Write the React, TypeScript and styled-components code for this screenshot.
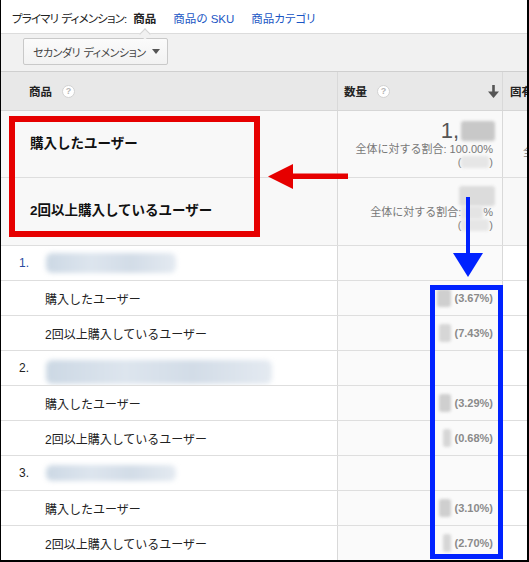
import React from 'react';
import styled, { createGlobalStyle } from 'styled-components';

const GlobalStyle = createGlobalStyle`
  html, body { margin: 0; padding: 0; background: #fff; }
  body {
    font-family: "Liberation Sans", "Noto Sans CJK JP", sans-serif;
    color: #222;
  }
  * { box-sizing: border-box; }
`;

const Frame = styled.div`
  position: relative;
  width: 529px;
  height: 562px;
  border-left: 1px solid #000;
  border-right: 2px solid #000;
  border-bottom: 2px solid #000;
  overflow: hidden;
  background: #fff;
`;

const PrimaryBar = styled.div`
  height: 34px;
  display: flex;
  align-items: center;
  padding: 2px 0 0 11px;
  border-bottom: 1px solid #dcdcdc;
  font-size: 11.5px;
  white-space: nowrap;
  font-feature-settings: "palt";
`;

const DimLabel = styled.span`
  color: #222;
  margin-right: 7px;
  letter-spacing: -0.85px;
  word-spacing: 1px;
`;

const DimOption = styled.span<{ $active?: boolean }>`
  position: relative;
  margin-right: 17px;
  color: ${(p) => (p.$active ? '#222' : '#1a56c4')};
  font-weight: ${(p) => (p.$active ? 700 : 400)};

  ${(p) =>
    p.$active &&
    `
    &::after {
      content: "";
      position: absolute;
      left: 50%;
      bottom: -12px;
      width: 7px;
      height: 7px;
      margin-left: -4px;
      background: #f1f1f1;
      border-top: 1px solid #d4d4d4;
      border-left: 1px solid #d4d4d4;
      transform: rotate(45deg);
    }
  `}
`;

const SecondaryBar = styled.div`
  height: 37px;
  background: #f1f1f1;
  padding: 4px 0 0 22px;
`;

const SelectButton = styled.div`
  width: 145px;
  height: 27px;
  display: flex;
  align-items: center;
  justify-content: space-between;
  padding: 0 7px 0 9px;
  border: 1px solid #c9c9c9;
  border-radius: 2px;
  background: linear-gradient(#fbfbfb, #f2f2f2);
  font-size: 11px;
  color: #444;
  white-space: nowrap;
  letter-spacing: -0.5px;
  word-spacing: 1px;
  font-feature-settings: "palt";
`;

const Caret = styled.span`
  flex: none;
  width: 0;
  height: 0;
  border-left: 4px solid transparent;
  border-right: 4px solid transparent;
  border-top: 5px solid #555;
`;

const Row = styled.div<{ $h: number; $head?: boolean }>`
  display: grid;
  grid-template-columns: 337px 165px 1fr;
  height: ${(p) => p.$h}px;
  border-bottom: 1px solid ${(p) => (p.$head ? '#d6d6d6' : '#dedede')};
  ${(p) => p.$head && 'border-top: 1px solid #cfcfcf; background: #e8e8e8;'}
`;

const Cell = styled.div<{ $bg?: string; $last?: boolean }>`
  display: flex;
  align-items: center;
  min-width: 0;
  overflow: hidden;
  white-space: nowrap;
  background: ${(p) => p.$bg || 'transparent'};
  border-right: ${(p) => (p.$last ? 'none' : '1px solid #d9d9d9')};
`;

const HeadCell = styled(Cell)`
  padding: 0 2px 0 28px;
  font-size: 11.5px;
  font-weight: 700;
  color: #222;
  gap: 10px;
`;

const HeadCellMetric = styled(HeadCell)`
  padding-left: 6px;
`;

const HeadCellEdge = styled(HeadCell)`
  padding-left: 7px;
`;

const Help = styled.span`
  width: 13px;
  height: 13px;
  border-radius: 50%;
  border: 1px solid #d2d2d2;
  background: #fff;
  color: #b5b5b5;
  font-size: 9px;
  font-weight: 700;
  display: inline-flex;
  align-items: center;
  justify-content: center;
`;

const SortArrow = styled.svg`
  margin-left: auto;
  margin-right: 1px;
`;

const SummaryLabel = styled(Cell)`
  padding: 0 0 5px 29px;
  font-size: 13.5px;
  font-weight: 700;
  color: #111;
`;

const SummaryValue = styled(Cell)`
  flex-direction: column;
  align-items: flex-end;
  justify-content: flex-start;
  padding: 8px 7px 0 0;
`;

const BigNum = styled.div`
  display: flex;
  align-items: center;
  gap: 2px;
  font-size: 22px;
  line-height: 24px;
  color: #555;
`;

const ShareLine = styled.div`
  display: flex;
  align-items: center;
  font-size: 11px;
  line-height: 13px;
  color: #777;
  margin-right: 2px;
`;

const ParenLine = styled(ShareLine)`
  line-height: 12px;
`;

const EdgeText = styled(Cell)`
  align-items: flex-start;
  padding: 32px 0 0 20px;
  font-size: 11px;
  color: #777;
`;

const Blob = styled.span<{ $w: number; $h: number; $c?: string }>`
  display: inline-block;
  width: ${(p) => p.$w}px;
  height: ${(p) => p.$h}px;
  background: ${(p) => p.$c || '#d9d9d9'};
  filter: blur(1.5px);
  border-radius: 3px;
`;

const GroupCell = styled(Cell)`
  padding-left: 18px;
  font-size: 12px;
  color: #222;
`;

const Index = styled.span<{ $blue?: boolean }>`
  width: 27px;
  color: ${(p) => (p.$blue ? '#2a4aa0' : '#222')};
`;

const NameBlur = styled.span<{ $w: number; $h: number; $dy: number }>`
  display: inline-block;
  width: ${(p) => p.$w}px;
  height: ${(p) => p.$h}px;
  margin-top: ${(p) => p.$dy}px;
  background: linear-gradient(90deg, #ccd8e4 0%, #dde5ee 35%, #d2dce7 65%, #e4eaf1 100%);
  filter: blur(2.5px);
  border-radius: 6px;
`;

const SubLabel = styled(Cell)`
  padding-left: 44px;
  font-size: 12px;
  color: #222;
`;

const SubValue = styled(Cell)`
  justify-content: flex-end;
  gap: 3px;
  padding-right: 9px;
  font-size: 11px;
  font-weight: 700;
  color: #8a8a8a;
`;

const Outline = styled.div<{ $x: number; $y: number; $w: number; $h: number; $c: string; $t: number }>`
  position: absolute;
  left: ${(p) => p.$x - 1}px;
  top: ${(p) => p.$y}px;
  width: ${(p) => p.$w}px;
  height: ${(p) => p.$h}px;
  border: ${(p) => p.$t}px solid ${(p) => p.$c};
  pointer-events: none;
`;

const Overlay = styled.svg<{ $x: number; $y: number }>`
  position: absolute;
  left: ${(p) => p.$x - 1}px;
  top: ${(p) => p.$y}px;
  pointer-events: none;
`;

const RED = '#e60000';
const BLUE = '#0022ff';

const groups = [
  { idx: '1.', blue: true, w: 130, h: 20, dy: 0, a: '3.67%', b: '7.43%', bw: [14, 12] },
  { idx: '2.', blue: false, w: 226, h: 24, dy: 8, a: '3.29%', b: '0.68%', bw: [12, 8] },
  { idx: '3.', blue: false, w: 130, h: 16, dy: 0, a: '3.10%', b: '2.70%', bw: [12, 8] },
];

const MetricBg = '#fafafa';

export default function App() {
  return (
    <Frame>
      <GlobalStyle />
      <PrimaryBar>
        <DimLabel>プライマリ ディメンション:</DimLabel>
        <DimOption $active>商品</DimOption>
        <DimOption>商品の SKU</DimOption>
        <DimOption>商品カテゴリ</DimOption>
      </PrimaryBar>
      <SecondaryBar>
        <SelectButton>
          セカンダリ ディメンション
          <Caret />
        </SelectButton>
      </SecondaryBar>

      <Row $h={40} $head>
        <HeadCell>
          商品 <Help>?</Help>
        </HeadCell>
        <HeadCellMetric>
          数量 <Help>?</Help>
          <SortArrow width="11" height="13" viewBox="0 0 11 13">
            <rect x="4.2" y="0" width="2.6" height="8" fill="#555" />
            <polygon points="0,6.5 11,6.5 5.5,13" fill="#555" />
          </SortArrow>
        </HeadCellMetric>
        <HeadCellEdge $last>固有</HeadCellEdge>
      </Row>

      <Row $h={67}>
        <SummaryLabel $bg="#f8f8f8">購入したユーザー</SummaryLabel>
        <SummaryValue $bg="#f9f9f9">
          <BigNum>
            1,
            <Blob $w={34} $h={20} $c="#c8c8c8" />
          </BigNum>
          <ShareLine>全体に対する割合: 100.00%</ShareLine>
          <ParenLine>
            (<Blob $w={28} $h={12} $c="#e6e6e6" />)
          </ParenLine>
        </SummaryValue>
        <EdgeText $bg="#f8f8f8" $last>
          全体に対する割合
        </EdgeText>
      </Row>

      <Row $h={68}>
        <SummaryLabel $bg="#f8f8f8">2回以上購入しているユーザー</SummaryLabel>
        <SummaryValue $bg="#f9f9f9">
          <BigNum>
            <Blob $w={36} $h={20} $c="#dcdcdc" />
          </BigNum>
          <ShareLine>
            全体に対する割合: <Blob $w={22} $h={13} $c="#e4e4e4" />%
          </ShareLine>
          <ParenLine>
            (<Blob $w={28} $h={12} $c="#e6e6e6" />)
          </ParenLine>
        </SummaryValue>
        <Cell $bg="#f8f8f8" $last />
      </Row>

      {groups.map((g) => (
        <React.Fragment key={g.idx}>
          <Row $h={35}>
            <GroupCell>
              <Index $blue={g.blue}>{g.idx}</Index>
              <NameBlur $w={g.w} $h={g.h} $dy={g.dy} />
            </GroupCell>
            <Cell $bg={MetricBg} />
            <Cell $last />
          </Row>
          <Row $h={35}>
            <SubLabel>購入したユーザー</SubLabel>
            <SubValue $bg={MetricBg}>
              <Blob $w={g.bw[0]} $h={18} $c="#cfcfcf" />({g.a})
            </SubValue>
            <Cell $last />
          </Row>
          <Row $h={35}>
            <SubLabel>2回以上購入しているユーザー</SubLabel>
            <SubValue $bg={MetricBg}>
              <Blob $w={g.bw[1]} $h={18} $c="#d6d6d6" />({g.b})
            </SubValue>
            <Cell $last />
          </Row>
        </React.Fragment>
      ))}

      <Outline $x={9} $y={116} $w={251} $h={121} $c={RED} $t={6} />
      <Overlay $x={266} $y={160} width="85" height="32" viewBox="0 0 85 32">
        <polygon points="2,16.5 27,4 27,29" fill={RED} />
        <rect x="26" y="13.5" width="56" height="5.5" fill={RED} />
      </Overlay>

      <Overlay $x={450} $y={195} width="36" height="85" viewBox="0 0 36 85">
        <rect x="16" y="2" width="4" height="60" fill={BLUE} />
        <polygon points="3,58 33,58 18,82" fill={BLUE} />
      </Overlay>
      <Outline $x={430} $y={285} $w={73} $h={274} $c={BLUE} $t={5} />
    </Frame>
  );
}
